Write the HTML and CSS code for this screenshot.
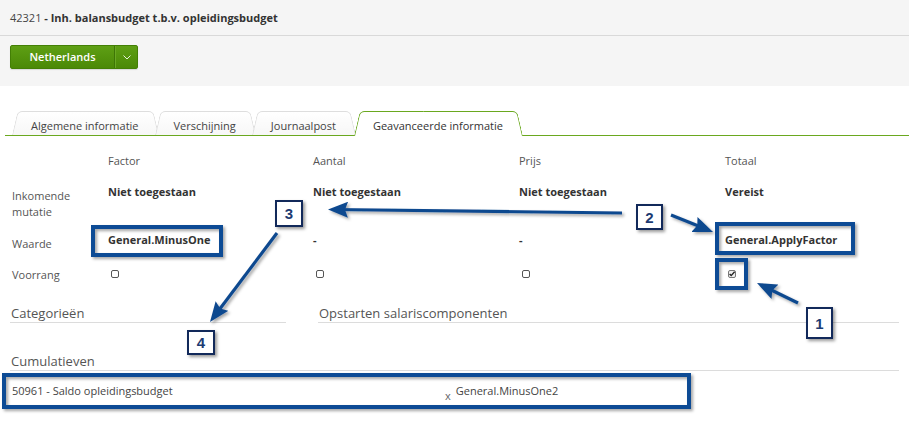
FILE: index.html
```html
<!DOCTYPE html>
<html lang="nl">
<head>
<meta charset="utf-8">
<title>42321</title>
<link rel="stylesheet" href="styles.css">
</head>
<body>
<div class="page">
  <header class="titlebar"><span class="code">42321</span><b class="name"> - Inh. balansbudget t.b.v. opleidingsbudget</b></header>
  <div class="toolbar">
    <div class="split-btn">
      <span class="btn-main">Netherlands</span>
      <span class="btn-caret"><svg width="8" height="5" viewBox="0 0 8 5"><polyline points="0.5,0.5 4,4 7.5,0.5" fill="none" stroke="#e6f0dc" stroke-width="1"/></svg></span>
    </div>
  </div>
  <nav class="tabs">
    <span class="tab">Algemene informatie</span>
    <span class="tab">Verschijning</span>
    <span class="tab">Journaalpost</span>
    <span class="tab active">Geavanceerde informatie</span>
  </nav>
  <section class="fields">
    <span></span>
    <span class="hd">Factor</span>
    <span class="hd">Aantal</span>
    <span class="hd">Prijs</span>
    <span class="hd">Totaal</span>

    <span class="lbl">Inkomende mutatie</span>
    <span class="val">Niet toegestaan</span>
    <span class="val">Niet toegestaan</span>
    <span class="val">Niet toegestaan</span>
    <span class="val">Vereist</span>

    <span class="lbl">Waarde</span>
    <span class="val">General.MinusOne</span>
    <span class="val">-</span>
    <span class="val">-</span>
    <span class="val">General.ApplyFactor</span>

    <span class="lbl lbl-cb">Voorrang</span>
    <span class="cbcell"><span class="cb"></span></span>
    <span class="cbcell"><span class="cb"></span></span>
    <span class="cbcell"><span class="cb"></span></span>
    <span class="cbcell"><span class="cb checked"><svg width="8" height="8" viewBox="0 0 8 8"><polyline points="1.6,4 3.2,5.6 6.6,1.8" fill="none" stroke="#222" stroke-width="1.4"/></svg></span></span>
  </section>
  <section class="sections">
    <h3 class="sec-title">Categorieën</h3>
    <h3 class="sec-title">Opstarten salariscomponenten</h3>
  </section>
  <section class="cum">
    <h3 class="sec-title">Cumulatieven</h3>
    <div class="cum-row">
      <span class="cum-name">50961 - Saldo opleidingsbudget</span>
      <span class="cum-val"><span class="x">x</span>General.MinusOne2</span>
    </div>
  </section>

  <svg class="annot" width="909" height="429" viewBox="0 0 909 429">
    <defs>
      <filter id="sh" x="-10%" y="-30%" width="130%" height="180%">
        <feDropShadow dx="2" dy="2" stdDeviation="1.4" flood-color="#000" flood-opacity="0.35"/>
      </filter>
      <marker id="ah" markerUnits="userSpaceOnUse" markerWidth="20" markerHeight="16" refX="15" refY="8" orient="auto">
        <path d="M0,0 L20,8 L0,16 L3,8 z" fill="#11498f"/>
      </marker>
    </defs>
    <g filter="url(#sh)" fill="none" stroke="#0e4b95" stroke-width="4">
      <rect x="93" y="227" width="128" height="28"/>
      <rect x="717" y="224" width="136" height="29"/>
      <rect x="717" y="260" width="29" height="28"/>
      <rect x="4" y="375" width="685" height="32"/>
    </g>
    <g filter="url(#sh)" stroke="#11498f" stroke-width="3.2" fill="none">
      <line x1="622" y1="213" x2="333" y2="209.5" marker-end="url(#ah)"/>
      <line x1="671" y1="215" x2="708.4" y2="230.1" marker-end="url(#ah)"/>
      <line x1="798" y1="303" x2="761.5" y2="285.2" marker-end="url(#ah)"/>
      <line x1="277" y1="233" x2="213" y2="318" marker-end="url(#ah)"/>
    </g>
  </svg>
  <span class="badge b3">3</span>
  <span class="badge b2">2</span>
  <span class="badge b1">1</span>
  <span class="badge b4">4</span>
</div>
</body>
</html>
```
FILE: styles.css
```css
html, body {
  margin: 0;
  padding: 0;
  background: #fff;
}
body {
  font-family: "Open Sans", "DejaVu Sans", sans-serif;
  font-size: 11px;
  color: #444;
}
.page {
  position: relative;
  width: 909px;
  height: 429px;
  overflow: hidden;
}
.titlebar {
  height: 35px;
  line-height: 35px;
  padding-left: 10px;
  background: #f5f5f5;
  border-bottom: 1px solid #d9d9d9;
  color: #444;
}
.titlebar .name {
  font-weight: 700;
  color: #333;
}
.toolbar {
  height: 50px;
  background: #f5f5f5;
  padding: 9px 0 0 10px;
  box-sizing: border-box;
}
.split-btn {
  display: inline-flex;
  height: 24px;
  border: 1px solid #437f05;
  border-radius: 2px;
  box-sizing: border-box;
  background: linear-gradient(#5e9f14, #4b8907);
  box-shadow: 0 1px 1px rgba(0,0,0,0.12);
  color: #fff;
}
.btn-main {
  width: 103px;
  text-align: center;
  line-height: 22px;
  font-weight: 600;
  border-right: 1px solid #3e7506;
}
.btn-caret {
  width: 21px;
  display: flex;
  align-items: center;
  justify-content: center;
  border-left: 1px solid #6aa824;
  padding-top: 1px;
}
.tabs {
  display: flex;
  margin: 25px 0 0 5px;
  padding-left: 7px;
  height: 24px;
  border-bottom: 1px solid #6aa81f;
}
.tab {
  position: relative;
  z-index: 0;
  padding: 7px 20px 0 19px;
  line-height: 16px;
  height: 24px;
  box-sizing: border-box;
  color: #444;
  margin-right: -4px;
}
.tab::before,
.tab::after {
  content: "";
  position: absolute;
  top: 0;
  bottom: 0;
  width: 55%;
  background: linear-gradient(#fff, #f7f7f7);
  border-top: 1px solid #dedede;
  transform-origin: bottom;
  z-index: -1;
}
.tab::before {
  left: 0;
  border-left: 1px solid #dedede;
  border-top-left-radius: 5px;
  transform: skewX(-13deg);
}
.tab::after {
  right: 0;
  border-right: 1px solid #dedede;
  border-top-right-radius: 5px;
  transform: skewX(13deg);
}
.tab.active {
  z-index: 2;
  height: 25px;
  margin-bottom: -1px;
  margin-left: 2px;
  color: #333;
}
.tab.active::before,
.tab.active::after {
  background: #fff;
  border-color: #6aa81f;
  border-width: 1.5px;
}
.fields {
  display: grid;
  grid-template-columns: 96px 205px 206px 206px 1fr;
  grid-template-rows: 31px 48px 34px 22px;
  margin-top: 17px;
  padding: 0 10px 0 12px;
  line-height: 16px;
}
.hd {
  color: #555;
}
.lbl {
  color: #555;
  padding-top: 4px;
  padding-right: 30px;
}
.lbl-cb {
  padding-top: 1px;
}
.val {
  font-weight: 700;
  color: #333;
}
.cbcell {
  padding: 4px 0 0 3px;
}
.cb {
  display: block;
  width: 8px;
  height: 8px;
  border: 1px solid #555;
  border-radius: 2px;
  box-sizing: border-box;
  background: #fff;
}
.cb.checked {
  border-color: #777;
  background: #eee;
  position: relative;
}
.cb.checked svg {
  position: absolute;
  left: -1px;
  top: -1px;
}
.sections {
  display: grid;
  grid-template-columns: 276px 1fr;
  column-gap: 32px;
  margin-top: 16px;
  padding: 0 10px 0 10px;
}
.sec-title {
  margin: 0;
  font-size: 13px;
  font-weight: 400;
  line-height: 18px;
  color: #555;
  padding-left: 1px;
  border-bottom: 1px solid #dcdcdc;
}
.cum {
  margin-top: 29px;
  padding: 0 10px;
}
.cum-row {
  display: grid;
  grid-template-columns: 433px 1fr;
  padding: 12px 0 0 2px;
  line-height: 16px;
  color: #444;
}
.x {
  display: inline-block;
  margin-right: 5px;
  position: relative;
  top: 5px;
  color: #666;
}
.annot {
  position: absolute;
  top: 0;
  left: 0;
  pointer-events: none;
}
.badge {
  position: absolute;
  box-sizing: border-box;
  border: 2.5px solid #12295a;
  background: #fff;
  box-shadow: 2px 2px 3px rgba(0,0,0,0.4);
  font-family: "Liberation Sans", Arial, sans-serif;
  font-weight: 700;
  font-size: 15px;
  color: #1d3b72;
  display: flex;
  align-items: center;
  justify-content: center;
}
.b3 { left: 275px; top: 200px; width: 28px; height: 27px; }
.b2 { left: 636px; top: 204px; width: 27px; height: 26px; }
.b1 { left: 806px; top: 307px; width: 27px; height: 32px; }
.b4 { left: 187px; top: 330px; width: 28px; height: 25px; }
```
